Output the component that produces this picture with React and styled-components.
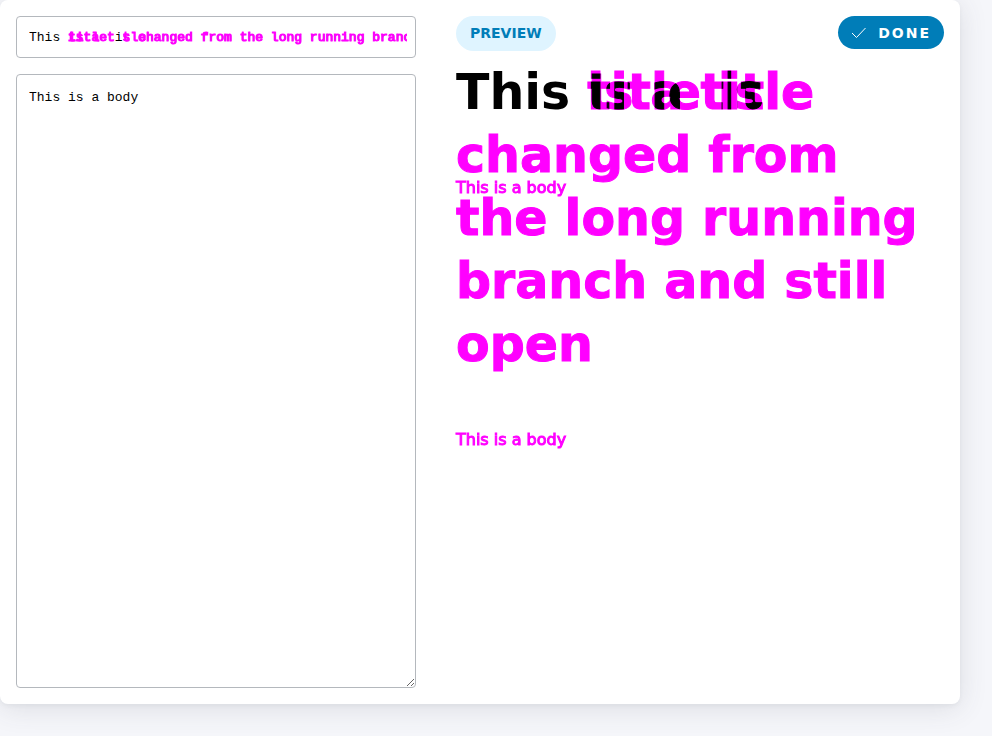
import React, { useState } from "react";
import styled, { createGlobalStyle, css } from "styled-components";

const CHANGED = "#ff00ff";
const BLUE = "#007db8";

const GlobalStyle = createGlobalStyle`
  *, *::before, *::after { box-sizing: border-box; }
  body {
    margin: 0;
    background: #f5f6fa;
    color: #000;
    font-family: "DejaVu Sans", sans-serif;
    font-size: 16px;
    line-height: 24px;
  }
`;

const Page = styled.main`
  display: flex;
  min-height: 100vh;
  padding: 0 32px 32px 0;
`;

const Card = styled.section`
  flex: 1;
  display: grid;
  grid-template-columns: minmax(0, 50fr) minmax(0, 61fr);
  gap: 40px;
  padding: 16px;
  background: #fff;
  border-radius: 8px;
  box-shadow: 0 2px 4px rgba(68, 74, 87, 0.05), 0 4px 28px rgba(68, 74, 87, 0.14);
`;

const Editor = styled.form`
  display: flex;
  flex-direction: column;
  gap: 16px;
`;

const fieldStyle = css`
  width: 100%;
  margin: 0;
  border: 1px solid #b4b8bd;
  border-radius: 4px;
  background: #fff;
  color: #000;
  font: 13px/20px "Liberation Mono", monospace;
  outline: none;
`;

const TitleField = styled.div`
  display: grid;
  > * { grid-area: 1 / 1; }
`;

const TitleInput = styled.input`
  ${fieldStyle}
  padding: 11px 8px 9px 12px;
`;

const TitleDiff = styled.div`
  margin: 12px 9px 10px 13px;
  overflow: hidden;
  white-space: pre;
  pointer-events: none;
  color: ${CHANGED};
  -webkit-text-stroke: 1px ${CHANGED};
  font: 13px/20px "Liberation Mono", monospace;
`;

const BodyInput = styled.textarea`
  ${fieldStyle}
  flex: 1;
  display: block;
  padding: 13px 12px;
  resize: vertical;
`;

const PreviewPane = styled.section`
  display: flex;
  flex-direction: column;
  gap: 10px;
`;

const PreviewHeader = styled.header`
  display: flex;
  align-items: flex-start;
  justify-content: space-between;
`;

const Badge = styled.span`
  padding: 7px 14px 8px;
  border-radius: 18px;
  background: #dff4ff;
  color: ${BLUE};
  font-size: 14px;
  font-weight: 700;
  line-height: 20px;
`;

const DoneButton = styled.button`
  display: flex;
  align-items: center;
  gap: 12px;
  height: 33px;
  margin: 0;
  padding: 0 13px 0 14px;
  border: 0;
  border-radius: 17px;
  background: ${BLUE};
  color: #fff;
  font: 700 14px/20px "DejaVu Sans", sans-serif;
  letter-spacing: 2px;
  cursor: pointer;
`;

const Versions = styled.div`
  display: grid;
  isolation: isolate;
  > * { grid-area: 1 / 1; }
`;

const Version = styled.article`
  min-width: 0;
  mix-blend-mode: ${({ $blend }) => ($blend ? "difference" : "normal")};
`;

const Heading = styled.h1`
  margin: 0 0 52px;
  font-size: 49px;
  font-weight: 700;
  line-height: 63px;
`;

const Changed = styled.span`
  color: ${CHANGED};
  -webkit-text-stroke: 1px ${CHANGED};
`;

const Shared = styled.span`
  visibility: ${({ $reserve }) => ($reserve ? "hidden" : "visible")};
`;

const Paragraph = styled.p`
  margin: 0;
`;

function CheckIcon() {
  return (
    <svg width="14" height="12" viewBox="0 0 14 12" fill="none" stroke="currentColor" aria-hidden="true">
      <path d="M0 6 L4.5 10.5 L13.5 1" />
    </svg>
  );
}

export default function App() {
  const [title, setTitle] = useState(
    "This title is changed from the long running branch and still open"
  );
  const [body, setBody] = useState("This is a body");

  return (
    <>
      <GlobalStyle />
      <Page>
        <Card>
          <Editor onSubmit={(e) => e.preventDefault()}>
            <TitleField>
              <TitleInput aria-label="Title" value={title} onChange={(e) => setTitle(e.target.value)} />
              <TitleDiff aria-hidden="true">{"     title  s changed from the long running branch"}</TitleDiff>
              <TitleDiff aria-hidden="true">{"     is a t tle"}</TitleDiff>
            </TitleField>
            <BodyInput aria-label="Body" value={body} onChange={(e) => setBody(e.target.value)} />
          </Editor>
          <PreviewPane>
            <PreviewHeader>
              <Badge>PREVIEW</Badge>
              <DoneButton type="button">
                <CheckIcon />
                DONE
              </DoneButton>
            </PreviewHeader>
            <Versions>
              <Version>
                <Heading>
                  <Shared>This </Shared>
                  <Changed>title is changed from the long running branch and still open</Changed>
                </Heading>
                <Paragraph>
                  <Changed>This is a body</Changed>
                </Paragraph>
              </Version>
              <Version $blend>
                <Heading>
                  <Shared $reserve>This </Shared>
                  <Changed>is a title</Changed>
                </Heading>
                <Paragraph>
                  <Changed>This is a body</Changed>
                </Paragraph>
              </Version>
            </Versions>
          </PreviewPane>
        </Card>
      </Page>
    </>
  );
}
